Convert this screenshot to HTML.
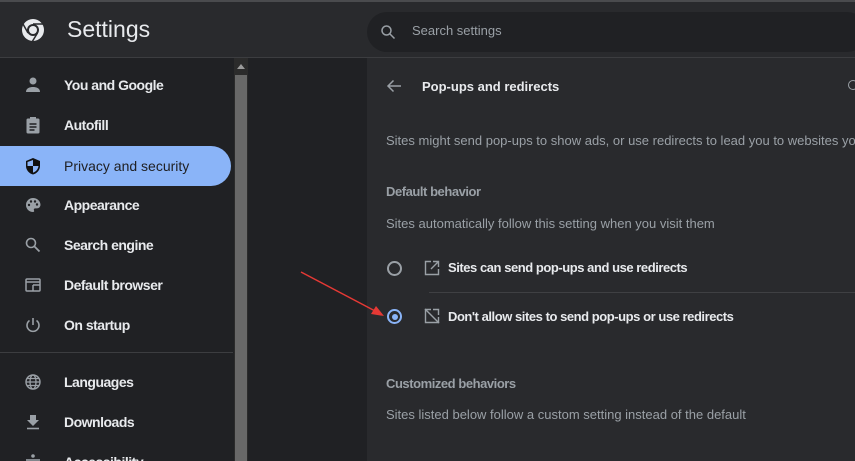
<!DOCTYPE html>
<html><head><meta charset="utf-8"><style>
*{margin:0;padding:0;box-sizing:border-box}
html,body{width:855px;height:461px;overflow:hidden}
body{background:#202124;font-family:"Liberation Sans",Arial,sans-serif;position:relative;color:#e8eaed}
.hdr{position:absolute;left:0;top:0;width:855px;height:58px;background:#292a2d;border-top:2px solid #4a4b4e;border-bottom:1px solid #3c3d40}
.title{position:absolute;left:67px;top:14px;font-size:23px;color:#e8eaed}
.search{position:absolute;left:367px;top:10px;width:500px;height:40px;border-radius:20px;background:#202124}
.search span{position:absolute;left:45px;top:11px;font-size:13px;color:#9aa0a6}
.side{position:absolute;left:0;top:58px;width:233px;height:403px;background:#202124;overflow:hidden}
.item{position:absolute;left:0;width:231px;height:40px}
.item .t{position:absolute;left:64px;top:12px;font-size:14px;font-weight:bold;color:#e8eaed;letter-spacing:-0.5px}
.item svg{position:absolute;left:24px;top:11px}
.sel{background:#8ab4f8;border-radius:0 20px 20px 0}
.sel .t{color:#202124;font-weight:normal;letter-spacing:0}
.sb{position:absolute;left:234px;top:58px;width:14px;height:403px;background:#2b2b2b}
.thumb{position:absolute;left:235px;top:75px;width:12px;height:386px;background:#686868}
.card{position:absolute;left:367px;top:58px;width:488px;height:403px;background:#292a2d;overflow:hidden}
.txt{position:absolute;font-size:13px;color:#9aa0a6;white-space:nowrap}
.b{font-weight:bold;letter-spacing:-0.45px}
</style></head><body>
<div class="hdr">
<svg style="position:absolute;left:20px;top:15px" width="26" height="26" viewBox="0 0 26 26"><circle cx="13" cy="13" r="11" fill="#e8eaed"/><circle cx="13" cy="13" r="6" fill="#292a2d"/><circle cx="13" cy="13" r="4" fill="#e8eaed"/><path d="M13 7 L24 7" stroke="#292a2d" stroke-width="1.5"/><path d="M8 16 L3 7" stroke="#292a2d" stroke-width="1.5"/><path d="M17.5 16 L12 25" stroke="#292a2d" stroke-width="1.5"/></svg>
<div class="title">Settings</div>
<div class="search"><svg style="position:absolute;left:13px;top:12px" width="16" height="16" viewBox="0 0 16 16"><circle cx="6.5" cy="6.5" r="4.5" stroke="#9aa0a6" stroke-width="1.5" fill="none"/><path d="M10 10l4.5 4.5" stroke="#9aa0a6" stroke-width="1.5"/></svg><span>Search settings</span></div>
</div>
<div class="side">
<div class="item" style="top:7px"><svg width="18" height="18" viewBox="0 0 18 18"><circle cx="9" cy="5" r="3.5" fill="#9aa0a6"/><path d="M2 16c0-4 4-5 7-5s7 1 7 5z" fill="#9aa0a6"/></svg><span class="t">You and Google</span></div>
<div class="item" style="top:47px"><svg width="18" height="18" viewBox="0 0 18 18"><rect x="2.5" y="2.5" width="13" height="15" rx="1.5" fill="#9aa0a6"/><rect x="6" y="1" width="6" height="3" fill="#9aa0a6"/><path d="M5.5 8h7M5.5 11h7M5.5 14h5" stroke="#202124" stroke-width="1.4"/></svg><span class="t">Autofill</span></div>
<div class="item sel" style="top:88px"><svg width="18" height="18" viewBox="0 0 18 18"><path d="M9 1L2 4v5c0 4 3 7.5 7 8.5 4-1 7-4.5 7-8.5V4z" fill="#111"/><path d="M9 3v6H3.5V5zM9 9h5.5c-.3 3-2.5 5.8-5.5 6.6z" fill="#8ab4f8"/></svg><span class="t">Privacy and security</span></div>
<div class="item" style="top:127px"><svg width="18" height="18" viewBox="0 0 18 18"><path d="M9 2a7 7 0 000 14c1 0 1.5-.7 1-1.6-.5-1 .2-2 1.2-2H13a3.5 3.5 0 003.5-3.5C16.5 5 13 2 9 2z" fill="#9aa0a6"/><circle cx="5" cy="9" r="1.2" fill="#202124"/><circle cx="7" cy="5.5" r="1.2" fill="#202124"/><circle cx="11" cy="5.5" r="1.2" fill="#202124"/><circle cx="13" cy="8.5" r="1.2" fill="#202124"/></svg><span class="t">Appearance</span></div>
<div class="item" style="top:167px"><svg width="18" height="18" viewBox="0 0 18 18"><circle cx="7" cy="7" r="4.5" stroke="#9aa0a6" stroke-width="1.6" fill="none"/><path d="M10.5 10.5l5 5" stroke="#9aa0a6" stroke-width="1.8"/></svg><span class="t">Search engine</span></div>
<div class="item" style="top:207px"><svg width="18" height="18" viewBox="0 0 18 18"><rect x="2" y="3" width="14" height="12" rx="1" stroke="#9aa0a6" stroke-width="1.5" fill="none"/><path d="M2 6h14M9 9h7" stroke="#9aa0a6" stroke-width="1.5"/><path d="M9 9v6" stroke="#9aa0a6" stroke-width="1.5"/></svg><span class="t">Default browser</span></div>
<div class="item" style="top:247px"><svg width="18" height="18" viewBox="0 0 18 18"><path d="M9 2v7" stroke="#9aa0a6" stroke-width="1.6"/><path d="M5.5 4.5a6 6 0 107 0" stroke="#9aa0a6" stroke-width="1.6" fill="none"/></svg><span class="t">On startup</span></div>
<div style="position:absolute;left:0;top:294px;width:233px;height:1px;background:#3c3d40"></div>
<div class="item" style="top:304px"><svg width="18" height="18" viewBox="0 0 18 18"><circle cx="9" cy="9" r="7" stroke="#9aa0a6" stroke-width="1.4" fill="none"/><ellipse cx="9" cy="9" rx="3" ry="7" stroke="#9aa0a6" stroke-width="1.3" fill="none"/><path d="M2 9h14M3 5.5h12M3 12.5h12" stroke="#9aa0a6" stroke-width="1.2"/></svg><span class="t">Languages</span></div>
<div class="item" style="top:344px"><svg width="18" height="18" viewBox="0 0 18 18"><path d="M6 2h6v5h3l-6 6-6-6h3z" fill="#9aa0a6"/><path d="M3 15.5h12" stroke="#9aa0a6" stroke-width="1.6"/></svg><span class="t">Downloads</span></div>
<div class="item" style="top:384px"><svg width="18" height="18" viewBox="0 0 18 18"><circle cx="9" cy="3" r="1.8" fill="#9aa0a6"/><path d="M2 7h14" stroke="#9aa0a6" stroke-width="1.6"/></svg><span class="t">Accessibility</span></div>
</div>
<div class="sb"></div><div class="thumb"></div>
<svg style="position:absolute;left:237px;top:64px" width="8" height="5"><path d="M0 5L4 0 8 5z" fill="#9a9a9a"/></svg>
<div class="card">
<svg style="position:absolute;left:19px;top:20px" width="16" height="16" viewBox="0 0 16 16"><path d="M15 8H2M7.5 2.5L2 8l5.5 5.5" stroke="#9aa0a6" stroke-width="1.5" fill="none"/></svg>
<div style="position:absolute;left:55px;top:21px;font-size:13px;font-weight:bold;color:#e8eaed">Pop-ups and redirects</div>
<div style="position:absolute;left:481px;top:22px;width:10px;height:10px;border:1.5px solid #9aa0a6;border-radius:50%"></div>
<div class="txt" style="left:19px;top:75px">Sites might send pop-ups to show ads, or use redirects to lead you to websites you</div>
<div class="txt b" style="left:19px;top:126px">Default behavior</div>
<div class="txt" style="left:19px;top:158px">Sites automatically follow this setting when you visit them</div>
<div style="position:absolute;left:20px;top:203px;width:15px;height:15px;border:2px solid #9aa0a6;border-radius:50%"></div>
<svg style="position:absolute;left:57px;top:202px" width="16" height="16" viewBox="0 0 16 16"><path d="M7 1.5H1.5v13h13V9" stroke="#9aa0a6" stroke-width="1.4" fill="none"/><path d="M9 1.5h5.5V7M14.5 1.5L7 9" stroke="#9aa0a6" stroke-width="1.4" fill="none"/></svg>
<div class="b" style="position:absolute;left:81px;top:202px;font-size:13px;color:#e8eaed;white-space:nowrap">Sites can send pop-ups and use redirects</div>
<div style="position:absolute;left:62px;top:234px;width:426px;height:1px;background:#3f4043"></div>
<div style="position:absolute;left:20px;top:251px;width:15px;height:15px;border:2px solid #8ab4f8;border-radius:50%"><div style="position:absolute;left:2.5px;top:2.5px;width:6px;height:6px;border-radius:50%;background:#8ab4f8"></div></div>
<svg style="position:absolute;left:57px;top:250px" width="16" height="16" viewBox="0 0 16 16"><path d="M7 1.5H1.5v13h13V9" stroke="#9aa0a6" stroke-width="1.4" fill="none"/><path d="M9 1.5h5.5V7" stroke="#9aa0a6" stroke-width="1.4" fill="none"/><path d="M1 1l14 14" stroke="#9aa0a6" stroke-width="1.4"/></svg>
<div class="b" style="position:absolute;left:81px;top:251px;font-size:13px;color:#e8eaed;white-space:nowrap">Don't allow sites to send pop-ups or use redirects</div>
<div class="txt b" style="left:19px;top:318px">Customized behaviors</div>
<div class="txt" style="left:19px;top:349px">Sites listed below follow a custom setting instead of the default</div>
</div>
<svg style="position:absolute;left:0;top:0" width="855" height="461"><path d="M301 272L377 312" stroke="#e53935" stroke-width="1.5"/><path d="M384 316L371 314 376 306z" fill="#e53935"/></svg>
</body></html>
